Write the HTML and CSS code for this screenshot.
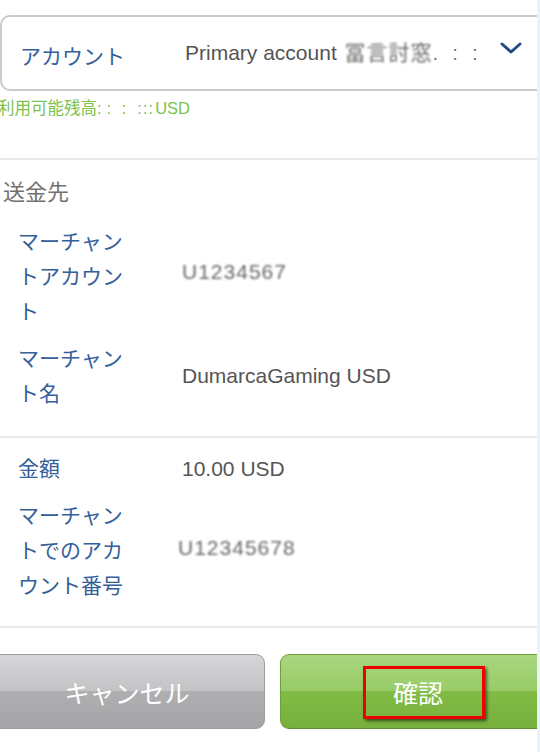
FILE: index.html
```html
<!DOCTYPE html>
<html lang="ja">
<head>
<meta charset="utf-8">
<link rel="stylesheet" href="styles.css">
</head>
<body>
<div class="page">
  <section class="sec-account">
    <div class="account-box">
      <div class="account-label">アカウント</div>
      <div class="select-text">Primary account <span class="blur blur-acc">冨言討窓</span><span class="dots">. : :</span></div>
      <svg class="chevron" width="22" height="12" viewBox="0 0 22 12"><path d="M2 2 L11 10 L20 2" fill="none" stroke="#1f4a82" stroke-width="3" stroke-linecap="round" stroke-linejoin="round"/></svg>
    </div>
    <div class="balance">利用可能残高:<span class="blur-g b1">: :</span><span class="blur-g b2">:::</span><span class="cur">USD</span></div>
  </section>

  <section class="sec sec-dest">
    <div class="sec-title">送金先</div>
    <div class="rows">
      <div class="label">マーチャントアカウント</div>
      <div class="value value-up"><span class="blur">U1234567</span></div>
      <div class="label">マーチャント名</div>
      <div class="value">DumarcaGaming USD</div>
    </div>
  </section>

  <section class="sec sec-amount">
    <div class="rows">
      <div class="label">金額</div>
      <div class="value">10.00 USD</div>
      <div class="label">マーチャントでのアカウント番号</div>
      <div class="value value-up"><span class="blur">U12345678</span></div>
    </div>
  </section>

  <section class="sec sec-buttons">
    <div class="buttons">
      <button class="btn btn-cancel">キャンセル</button>
      <button class="btn btn-confirm">確認<span class="highlight"></span></button>
    </div>
  </section>
</div>
<div class="strip"></div>
</body>
</html>
```

FILE: styles.css
```css
html, body {
  margin: 0;
  padding: 0;
}
body {
  width: 540px;
  height: 752px;
  overflow: hidden;
  display: flex;
  background: #ffffff;
  font-family: "Liberation Sans", "Noto Sans CJK JP", sans-serif;
}
.page {
  width: 537px;
  flex: none;
  overflow: hidden;
  background: #ffffff;
  padding-top: 15px;
}
.strip {
  width: 3px;
  flex: none;
  background: #edf1f8;
}

.sec-account {
  padding-bottom: 40px;
}
.account-box {
  box-sizing: border-box;
  height: 76px;
  margin-right: -20px;
  border: 2px solid #cbcbcb;
  border-radius: 10px;
  display: flex;
  align-items: center;
  padding-left: 18px;
  padding-right: 33px;
}
.account-label {
  width: 165px;
  flex: none;
  font-size: 21px;
  color: #34609a;
  padding-top: 4px;
}
.select-text {
  flex: 1;
  font-size: 21px;
  color: #555555;
  white-space: nowrap;
  padding-bottom: 4px;
}
.chevron {
  flex: none;
  margin-bottom: 10px;
}
.blur {
  display: inline-block;
  color: #666;
  filter: blur(1.3px);
  letter-spacing: 1px;
}
.blur-acc {
  letter-spacing: 1px;
  margin-left: 2px;
  filter: blur(0.8px);
}
.dots {
  color: #777;
  letter-spacing: 4px;
  margin-left: 0;
  filter: blur(0.6px);
  display: inline-block;
}
.balance {
  margin-top: 7px;
  margin-left: -2px;
  font-size: 16.5px;
  line-height: 20px;
  color: #7cc24b;
  white-space: nowrap;
}
.blur-g {
  display: inline-block;
  filter: blur(0.5px);
  letter-spacing: 3px;
}
.b1 {
  margin-left: 5px;
}
.b2 {
  margin-left: 8px;
  letter-spacing: 1px;
}
.cur {
  margin-left: 1px;
}

.sec {
  border-top: 2px solid #e9e9e9;
}
.sec-dest {
  padding-top: 18px;
  padding-bottom: 25px;
}
.sec-title {
  font-size: 22px;
  line-height: 30px;
  color: #707070;
  padding-left: 3px;
  margin-bottom: 16px;
}
.rows {
  display: grid;
  grid-template-columns: 108px 1fr;
  column-gap: 56px;
  row-gap: 12px;
  padding-left: 18px;
}
.label {
  font-size: 21px;
  line-height: 35px;
  color: #34609a;
}
.value {
  align-self: center;
  font-size: 21px;
  color: #555555;
}
.value-up {
  margin-bottom: 10px;
}
.sec-amount {
  padding-top: 13px;
  padding-bottom: 23px;
}
.sec-amount .value-up {
  margin-left: -4px;
  margin-bottom: 6px;
}

.sec-buttons {
  padding-top: 26px;
}
.buttons {
  display: flex;
  gap: 15px;
  margin-left: -11px;
  width: 567px;
}
.btn {
  flex: 1;
  height: 75px;
  border-radius: 9px;
  font-family: "Liberation Sans", "Noto Sans CJK JP", sans-serif;
  font-size: 25px;
  color: #ffffff;
  position: relative;
  padding: 0;
}
.btn-cancel {
  border: 1px solid #9c9c9e;
  background: linear-gradient(to bottom, #d6d6d8 0%, #c3c3c5 50%, #afafb1 50%, #a5a5a7 100%);
}
.btn-confirm {
  border: 1px solid #6d9e40;
  border-bottom-color: #5f8d36;
  background: linear-gradient(to bottom, #a9d67f 0%, #98cb66 50%, #81bc46 50%, #77b03c 100%);
}
.highlight {
  position: absolute;
  left: 82px;
  top: 11px;
  width: 122px;
  height: 53px;
  box-sizing: border-box;
  border: 3px solid #ee0000;
  box-shadow: 2px 2px 3px rgba(0, 0, 0, 0.55);
}
```
